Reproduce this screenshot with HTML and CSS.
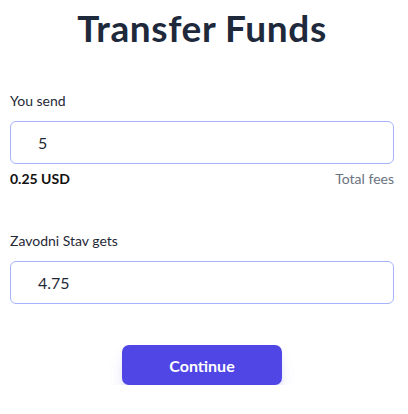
FILE: index.html
```html
<!DOCTYPE html>
<html>
<head>
<meta charset="utf-8">
<link rel="stylesheet" href="styles.css">
</head>
<body>
<div class="page">
  <h1 class="title">Transfer Funds</h1>
  <div class="field first">
    <label class="label">You send</label>
    <div class="input">5</div>
    <div class="fees"><span class="fee-amount">0.25 USD</span><span class="fee-label">Total fees</span></div>
  </div>
  <div class="field second">
    <label class="label">Zavodni Stav gets</label>
    <div class="input">4.75</div>
  </div>
  <div class="actions"><button class="btn">Continue</button></div>
</div>
</body>
</html>
```
FILE: styles.css
```css
html, body { margin: 0; padding: 0; background: #fff; }
body { font-family: Lato, "Open Sans", sans-serif; color: #1f2937; }
.page { padding: 8px 14px 0 10px; }
.title { margin: 0; text-align: center; font-size: 37px; line-height: 40px; font-weight: 700; letter-spacing: 0.6px; color: #1e293b; }
.field.first { margin-top: 43px; }
.field.second { margin-top: 42px; }
.label { display: block; font-size: 14px; line-height: 20px; color: #1f2937; margin-bottom: 10px; }
.input { box-sizing: border-box; height: 43px; border: 1px solid #a5b4fc; border-radius: 6px; padding: 0 0 0 27px; font-size: 16px; line-height: 41px; color: #1f2937; }
.fees { display: flex; justify-content: space-between; margin-top: 5px; font-size: 14px; line-height: 20px; }
.fee-amount { font-weight: 700; color: #111; }
.fee-label { color: #6b7280; }
.actions { display: flex; justify-content: center; margin-top: 41px; }
.btn { width: 160px; height: 40px; border: 0; border-radius: 7px; background: #4f46e5; color: #fff; font-family: inherit; font-size: 16px; font-weight: 700; box-shadow: 0 10px 15px -3px rgba(99,102,241,0.25), 0 4px 6px -4px rgba(99,102,241,0.25); }
```
